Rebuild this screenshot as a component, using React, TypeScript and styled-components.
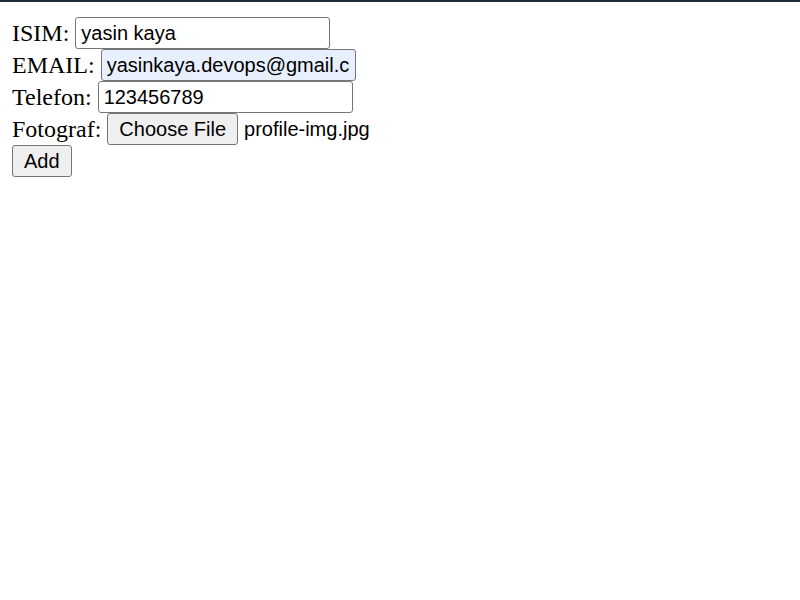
import { createGlobalStyle, styled } from "styled-components";

const GlobalStyle = createGlobalStyle`
  html {
    border-top: 2px solid #1e2a38;
    background: #ffffff;
  }

  body {
    margin: 12px;
    padding-top: 3px;
    font-family: "Liberation Serif", "Times New Roman", serif;
    font-size: 24px;
    color: #000000;
  }
`;

const SForm = styled.form`
  display: flex;
  flex-direction: column;
  align-items: flex-start;
`;

const SRow = styled.div`
  display: flex;
  align-items: center;
  height: 32px;
  white-space: pre;
`;

const SLabel = styled.label`
  font-family: "Liberation Serif", "Times New Roman", serif;
  font-size: 24px;
  line-height: 32px;
`;

const SInput = styled.input<{ $autofill?: boolean }>`
  box-sizing: border-box;
  width: 255px;
  height: 32px;
  margin: 0;
  padding: 0 5px;
  border: 1.5px solid #767676;
  border-radius: 3px;
  background-color: ${({ $autofill }) => ($autofill ? "#e8f0fe" : "#ffffff")};
  font-family: "Liberation Sans", Arial, sans-serif;
  font-size: 20px;
  color: #000000;
  outline: none;
`;

const SButton = styled.button`
  box-sizing: border-box;
  height: 32px;
  margin: 0;
  padding: 0 11px;
  border: 1.5px solid #767676;
  border-radius: 3px;
  background-color: #efefef;
  font-family: "Liberation Sans", Arial, sans-serif;
  font-size: 20px;
  color: #000000;
`;

const SFileName = styled.span`
  margin-left: 6px;
  font-family: "Liberation Sans", Arial, sans-serif;
  font-size: 20px;
`;

export default function App() {
  return (
    <>
      <GlobalStyle />
      <SForm onSubmit={(e) => e.preventDefault()}>
        <SRow>
          <SLabel>ISIM: </SLabel>
          <SInput type="text" defaultValue="yasin kaya" />
        </SRow>
        <SRow>
          <SLabel>EMAIL: </SLabel>
          <SInput type="text" $autofill defaultValue="yasinkaya.devops@gmail.com" />
        </SRow>
        <SRow>
          <SLabel>Telefon: </SLabel>
          <SInput type="text" defaultValue="123456789" />
        </SRow>
        <SRow>
          <SLabel>Fotograf: </SLabel>
          <SButton type="button">Choose File</SButton>
          <SFileName>profile-img.jpg</SFileName>
        </SRow>
        <SRow>
          <SButton type="submit">Add</SButton>
        </SRow>
      </SForm>
    </>
  );
}
